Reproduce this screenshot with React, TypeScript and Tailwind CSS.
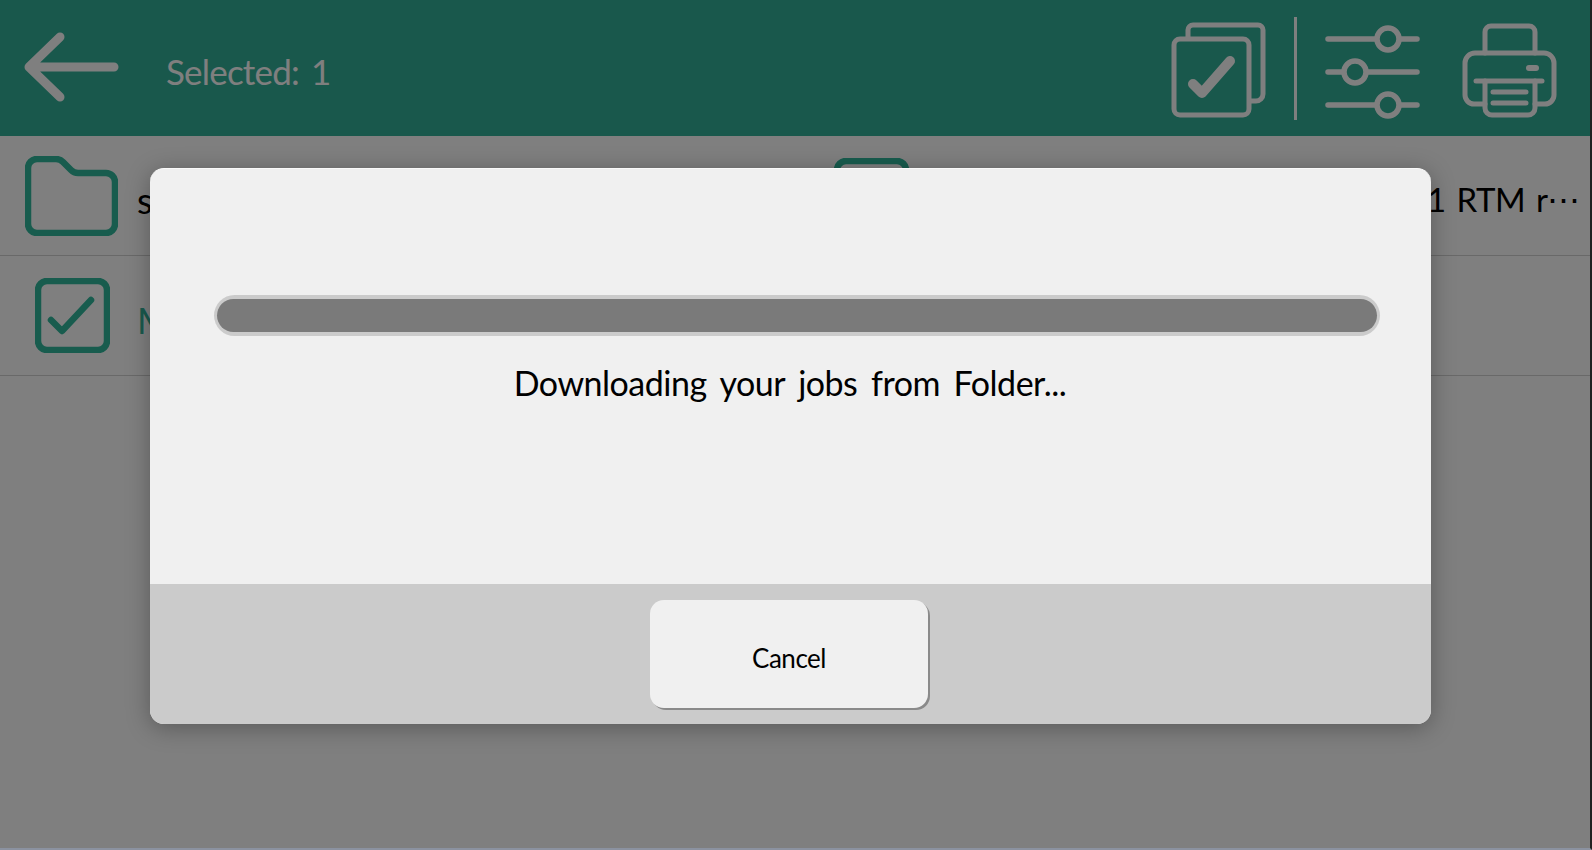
const font = '[font-family:Lato,"Noto_Sans",sans-serif]'

function BackIcon() {
  return (
    <svg viewBox="22 30 100 73" className="mb-[3px] w-[100px] h-[73px]" fill="none" stroke="#fff" strokeWidth="9" strokeLinecap="round" strokeLinejoin="round">
      <path d="M114 67H30M60 37L29 67L60 97" />
    </svg>
  )
}

function SelectAllIcon() {
  return (
    <svg viewBox="1170 21 98 98" className="w-[98px] h-[98px]" fill="none" stroke="#fff" strokeLinecap="round" strokeLinejoin="round">
      <path strokeWidth="5" d="M1188 38V30a5 5 0 0 1 5-5h65a5 5 0 0 1 5 5v64a7 7 0 0 1-7 7h-5" />
      <rect x="1174" y="39" width="75" height="76" rx="6" strokeWidth="5" />
      <path strokeWidth="10" d="M1193 84L1202 93L1230 61" />
    </svg>
  )
}

function SlidersIcon() {
  return (
    <svg viewBox="1324 21 98 98" className="w-[98px] h-[98px]" fill="none" stroke="#fff" strokeWidth="5.5" strokeLinecap="round">
      <path d="M1328 39H1376M1400 39H1417M1328 72H1343M1367 72H1417M1328 105H1376M1400 105H1417" />
      <circle cx="1388" cy="39" r="11" />
      <circle cx="1355" cy="72" r="11" />
      <circle cx="1388" cy="105" r="11" />
    </svg>
  )
}

function PrinterIcon() {
  return (
    <svg viewBox="1460 21 100 98" className="w-[100px] h-[98px]" fill="none" stroke="#fff" strokeWidth="5" strokeLinecap="round" strokeLinejoin="round">
      <path d="M1485 53V32a6 6 0 0 1 6-6h38a6 6 0 0 1 6 6v21" />
      <path d="M1485 104h-11a9 9 0 0 1-9-9V63a10 10 0 0 1 10-10h69a10 10 0 0 1 10 10v32a9 9 0 0 1-9 9h-10" />
      <path d="M1476 81H1542" />
      <path d="M1485 81v27a7 7 0 0 0 7 7h36a7 7 0 0 0 7-7V81" />
      <path d="M1493 92H1526M1493 103H1526" />
      <path strokeWidth="6" d="M1529 68H1536" />
    </svg>
  )
}

function FolderIcon() {
  return (
    <svg viewBox="0 0 93 80" className="w-[93px] h-[80px]" fill="none" stroke="#30b89c" strokeWidth="6.5" strokeLinejoin="round">
      <path d="M3 12a9 9 0 0 1 9-9h19a10 10 0 0 1 7 3l8 8a10 10 0 0 0 7 3h28a9 9 0 0 1 9 9v42a9 9 0 0 1-9 9H12a9 9 0 0 1-9-9Z" />
    </svg>
  )
}

function CheckIcon() {
  return (
    <svg viewBox="0 0 75 75" className="w-[75px] h-[75px]" fill="none" stroke="#30b89c" strokeLinecap="round" strokeLinejoin="round">
      <rect x="3" y="3" width="69" height="69" rx="9" strokeWidth="6.5" />
      <path strokeWidth="6.5" d="M16 42L27 53L56 22" />
    </svg>
  )
}

export default function App() {
  return (
    <div className={`relative w-[1592px] h-[850px] overflow-hidden border-r-2 border-b-2 border-r-[#222] border-b-[#8b92a0] bg-white ${font}`}>
      <header className="flex h-[136px] items-center bg-[#32b098] pl-[22px] pr-[30px]">
        <BackIcon />
        <span className="ml-[44px] mt-[6px] text-[35px] tracking-[-0.8px] text-white [word-spacing:4px]">Selected: 1</span>
        <div className="ml-auto flex items-center">
          <div className="mt-[4px]">
            <SelectAllIcon />
          </div>
          <div className="ml-[26px] mr-[27px] h-[103px] w-[3px] bg-white" />
          <div className="mt-[4px] flex gap-[38px]">
            <SlidersIcon />
            <PrinterIcon />
          </div>
        </div>
      </header>

      <div className="grid grid-cols-2 h-[120px] border-b border-[#d2d2d2]">
        <div className="flex items-center gap-[19px] pl-[25px]">
          <FolderIcon />
          <span className="mt-[8px] text-[36px] tracking-[-0.6px] text-black">system</span>
        </div>
        <div className="flex items-center pl-[39px] pr-[10px]">
          <CheckIcon />
          <span className="ml-auto mt-[8px] text-[33px] tracking-[-0.5px] text-black [word-spacing:3px]">Windows 2021 RTM r⋯</span>
        </div>
      </div>
      <div className="flex h-[120px] items-center gap-[27px] border-b border-[#d2d2d2] pl-[35px]">
        <CheckIcon />
        <span className="mt-[8px] text-[36px] tracking-[-0.6px] text-[#34b49c]">My Jobs</span>
      </div>

      <div className="absolute inset-0 bg-black/50 pl-[150px] pt-[168px]">
        <div className="flex h-[556px] w-[1281px] flex-col overflow-hidden rounded-[14px] border-t border-t-[#fafafa] bg-[#f0f0f0] shadow-[0_4px_24px_rgba(0,0,0,0.3)]">
          <div className="flex h-[415px] flex-col items-center pl-[64px] pr-[51px] pt-[126px]">
            <div className="h-[41px] w-full rounded-full bg-[#cbcbcb] px-[3px] py-[4px]">
              <div className="h-full rounded-full bg-[#7a7a7a]" />
            </div>
            <p className="mt-[23px] pr-[14px] text-[34px] leading-[48px] tracking-[-0.5px] text-black [word-spacing:5.5px]">Downloading your jobs from Folder...</p>
          </div>
          <div className="flex flex-1 justify-center bg-[#cbcbcb] pt-[16px] pr-[3px]">
            <button className="h-[108px] w-[278px] rounded-[14px] bg-[#f0f0f0] pt-[8px] text-[26px] tracking-[-0.5px] text-black shadow-[2px_2px_0_#8a8a8a]">Cancel</button>
          </div>
        </div>
      </div>
    </div>
  )
}
